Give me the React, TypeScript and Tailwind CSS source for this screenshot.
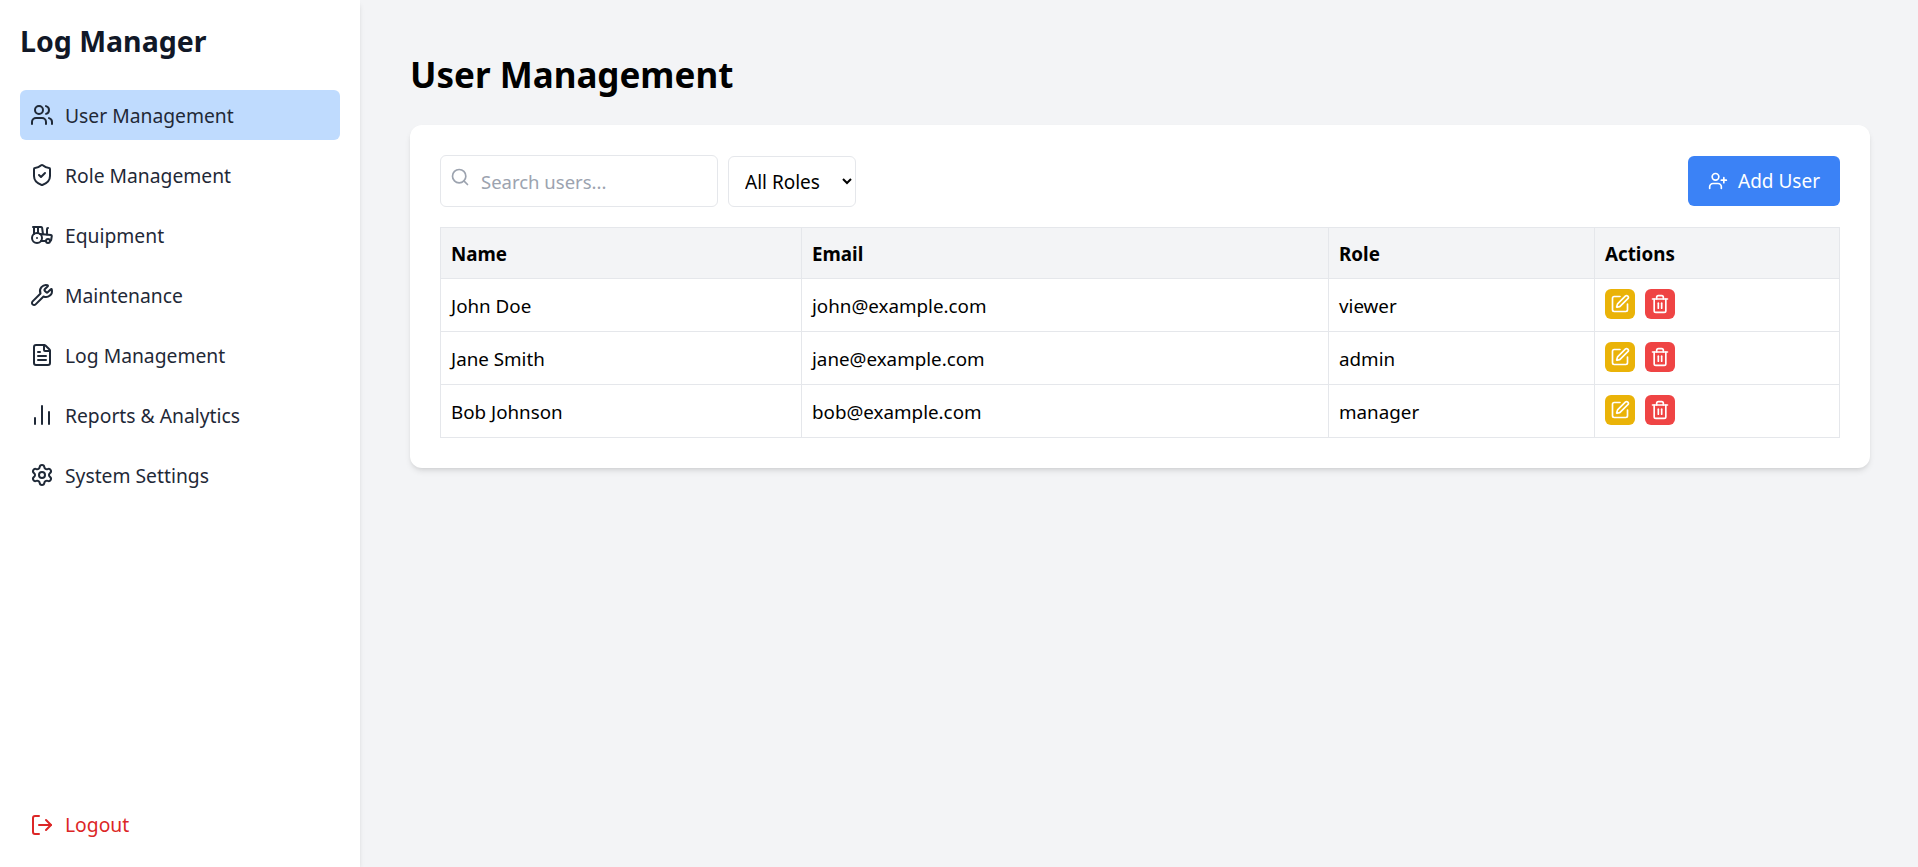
import {
  ChartNoAxesColumn,
  FileText,
  LogOut,
  Search,
  Settings,
  ShieldCheck,
  SquarePen,
  Tractor,
  Trash2,
  UserPlus,
  Users,
  Wrench,
} from "lucide-react";

const navItems = [
  { label: "User Management", icon: Users, active: true },
  { label: "Role Management", icon: ShieldCheck },
  { label: "Equipment", icon: Tractor },
  { label: "Maintenance", icon: Wrench },
  { label: "Log Management", icon: FileText },
  { label: "Reports & Analytics", icon: ChartNoAxesColumn },
  { label: "System Settings", icon: Settings },
];

const users = [
  { name: "John Doe", email: "john@example.com", role: "viewer" },
  { name: "Jane Smith", email: "jane@example.com", role: "admin" },
  { name: "Bob Johnson", email: "bob@example.com", role: "manager" },
];

export default function App() {
  return (
    <div className="flex h-[867px] overflow-hidden bg-[#f3f4f6] font-['Noto_Sans','Open_Sans',sans-serif] text-black">
      <aside className="flex w-[360px] shrink-0 flex-col bg-white px-5 pb-[17px] pt-[21px] shadow-md">
        <h1 className="mb-[29px] text-[28.5px] leading-[40px] font-bold text-[#111827]">Log Manager</h1>
        <nav className="flex flex-col gap-2.5">
          {navItems.map(({ label, icon: Icon, active }) => (
            <a
              key={label}
              className={`flex h-[50px] items-center gap-[11px] rounded-md px-[10px] text-[19.3px] text-[#1f2937] ${active ? "bg-[#bfdbfe]" : ""}`}
            >
              <Icon className="h-6 w-6" strokeWidth={2} />
              <span className="pt-0.5">{label}</span>
            </a>
          ))}
        </nav>
        <a className="mt-auto flex h-[50px] items-center gap-[11px] px-[10px] text-[19.3px] text-[#dc2626]">
          <LogOut className="h-6 w-6" />
          <span>Logout</span>
        </a>
      </aside>

      <main className="flex-1 pb-[50px] pl-[50px] pr-[48px] pt-[47px]">
        <h2 className="mb-[23px] text-[35px] leading-[55px] font-bold">User Management</h2>
        <div className="rounded-xl bg-white p-[30px] shadow-md">
          <div className="mb-5 flex items-center justify-between">
            <div className="flex items-center gap-2.5">
              <div className="relative">
                <Search className="absolute left-[10px] top-[12px] h-5 w-5 text-[#9ca3af]" />
                <input
                  placeholder="Search users..."
                  className="h-[52px] w-[278px] rounded-md border border-[#e5e7eb] pl-10 pr-3 text-[18.5px] placeholder:text-[#9ca3af]"
                />
              </div>
              <select className="h-[51px] w-[128px] rounded-md border border-[#e5e7eb] bg-white pl-3 pr-2 pt-0.5 text-[19px]">
                <option>All Roles</option>
              </select>
            </div>
            <button className="flex h-[50px] items-center gap-2.5 rounded-md bg-[#3b82f6] px-5 text-[19px] text-white">
              <UserPlus className="h-5 w-5" />
              Add User
            </button>
          </div>

          <table className="w-full table-fixed border-collapse text-[18.8px]">
            <thead>
              <tr className="h-[51px] bg-[#f3f4f6] text-left">
                <th className="w-[361px] border border-[#e5e7eb] px-2.5 pt-0.5 font-bold">Name</th>
                <th className="w-[527px] border border-[#e5e7eb] px-2.5 pt-0.5 font-bold">Email</th>
                <th className="w-[266px] border border-[#e5e7eb] px-2.5 pt-0.5 font-bold">Role</th>
                <th className="border border-[#e5e7eb] px-2.5 pt-0.5 font-bold">Actions</th>
              </tr>
            </thead>
            <tbody>
              {users.map((user) => (
                <tr key={user.email} className="h-[53px]">
                  <td className="border border-[#e5e7eb] px-2.5 pt-0.5">{user.name}</td>
                  <td className="border border-[#e5e7eb] px-2.5 pt-0.5">{user.email}</td>
                  <td className="border border-[#e5e7eb] px-2.5 pt-0.5">{user.role}</td>
                  <td className="border border-[#e5e7eb] px-2.5 pb-0.5">
                    <div className="flex gap-2.5">
                      <button className="flex h-[30px] w-[30px] items-center justify-center rounded-md bg-[#eab308] text-white">
                        <SquarePen className="h-5 w-5" />
                      </button>
                      <button className="flex h-[30px] w-[30px] items-center justify-center rounded-md bg-[#ef4444] text-white">
                        <Trash2 className="h-5 w-5" />
                      </button>
                    </div>
                  </td>
                </tr>
              ))}
            </tbody>
          </table>
        </div>
      </main>
    </div>
  );
}
